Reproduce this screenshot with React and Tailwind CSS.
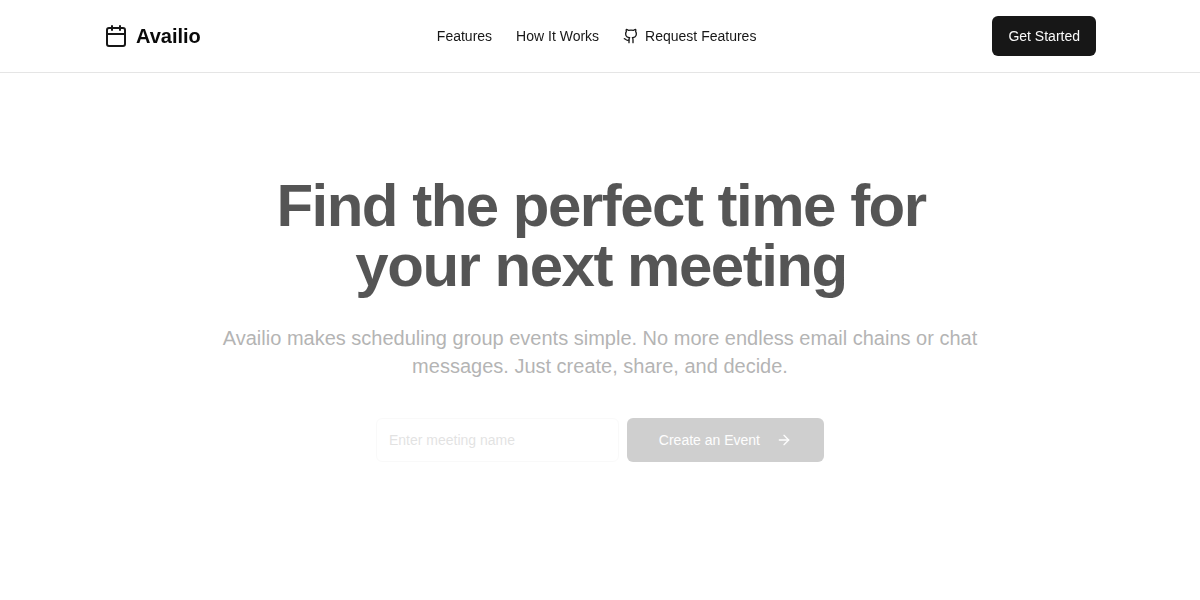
import { Calendar, Github, ArrowRight } from "lucide-react";

const App = () => {
  return (
    <div className="min-h-screen bg-white font-['Liberation_Sans',Arial,sans-serif]">
      <header className="sticky top-0 z-10 border-b border-[#e5e5e5] bg-white/95 backdrop-blur-sm">
        <div className="mx-auto flex h-[72px] max-w-5xl items-center justify-between px-4">
          <div className="flex items-center gap-2">
            <Calendar className="h-6 w-6 text-[#171717]" />
            <span className="text-xl font-bold text-[#0a0a0a]">Availio</span>
          </div>
          <nav className="flex items-center gap-6 text-sm text-[#171717]">
            <a href="#features">Features</a>
            <a href="#how">How It Works</a>
            <a href="#request" className="flex items-center gap-1.5">
              <Github className="h-4 w-4" />
              Request Features
            </a>
          </nav>
          <button className="h-10 rounded-md bg-[#171717] px-4 text-sm text-[#fafafa]">
            Get Started
          </button>
        </div>
      </header>
      <main className="mx-auto flex max-w-5xl flex-col items-center px-4 pt-[103px] text-center">
        <h1 className="max-w-3xl pl-0.5 text-6xl font-bold leading-[60px] tracking-tight text-[#0a0a0a] opacity-[0.69]">
          Find the perfect time for your next meeting
        </h1>
        <p className="mt-[28px] max-w-3xl text-xl text-[#737373] opacity-[0.535]">
          Availio makes scheduling group events simple. No more endless email chains or chat messages. Just create, share, and decide.
        </p>
        <div className="mt-[38px] flex w-full max-w-md gap-2 opacity-20">
          <input
            placeholder="Enter meeting name"
            className="h-11 flex-1 min-w-0 rounded-md border border-[#e5e5e5] bg-white px-3 text-sm placeholder:text-[#737373]"
          />
          <button className="flex h-11 items-center rounded-md bg-[#171717] px-8 text-sm text-[#fafafa]">
            Create an Event
            <ArrowRight className="ml-4 h-4 w-4" />
          </button>
        </div>
      </main>
    </div>
  );
};

export default App;
